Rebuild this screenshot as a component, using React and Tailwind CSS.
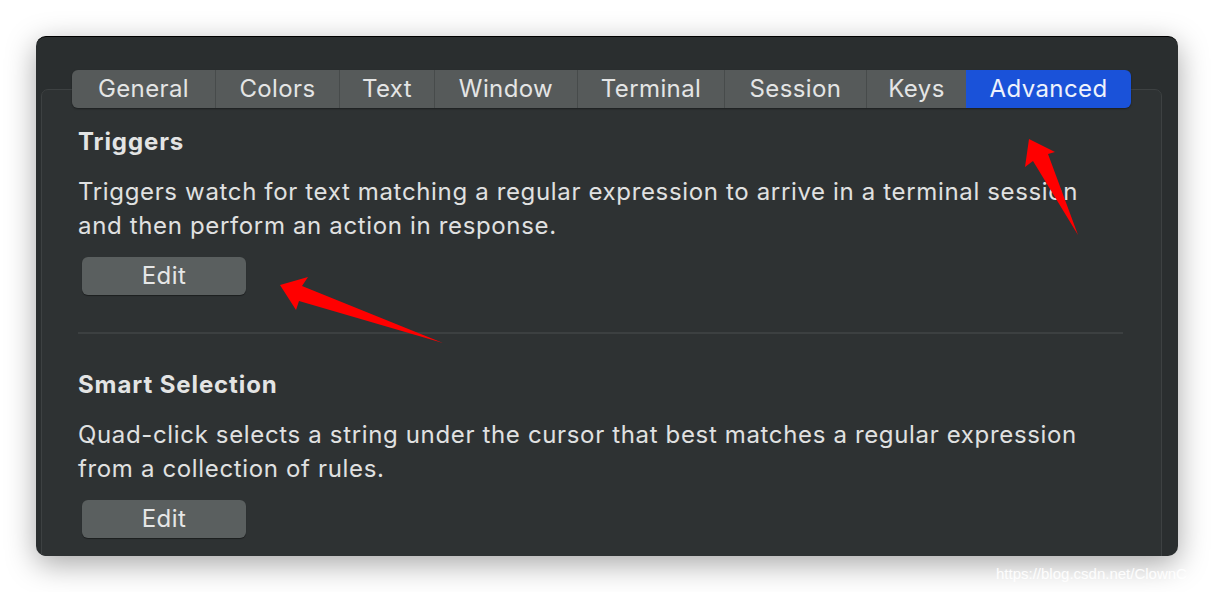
import React from 'react';

const tabs = ['General', 'Colors', 'Text', 'Window', 'Terminal', 'Session', 'Keys', 'Advanced'];
const tabWidths = ['w-[143px]', 'w-[124px]', 'w-[95px]', 'w-[143px]', 'w-[147px]', 'w-[142px]', 'w-[100px]', 'w-[165px]'];

function Section({ title, text }) {
  return (
    <div className="flex flex-col">
      <h2 className="text-[24px] font-bold leading-[30px] tracking-[0.9px] text-[#e3e4e4]">{title}</h2>
      <p className="mt-[18px] max-w-[1030px] text-[24px] leading-[34px] tracking-[0.65px] text-[#e0e1e1]">{text}</p>
      <button className="mt-[14px] ml-[4px] w-[164px] h-[38px] rounded-[6px] bg-[#5a5f5f] shadow-[0_1px_1px_rgba(0,0,0,0.4)] text-[24px] tracking-[0.4px] text-[#e6e7e7]">
        Edit
      </button>
    </div>
  );
}

export default function App() {
  return (
    <div className="relative w-[1214px] h-[592px] bg-white overflow-hidden" style={{ fontFamily: 'Inter, "Noto Sans", sans-serif' }}>
      <div className="absolute left-[36px] top-[36px] w-[1142px] h-[520px] rounded-[10px] bg-[#2a2e2f] border-t border-black shadow-[0_8px_30px_rgba(0,0,0,0.35)] overflow-hidden">
        <div className="relative pl-[5px] pr-[16px] pt-[52px]">
          {/* panel */}
          <div className="h-[520px] rounded-[7px] border border-[#3d4142] bg-[#2e3233] px-[36px] pt-[37px]">
            <Section
              title="Triggers"
              text="Triggers watch for text matching a regular expression to arrive in a terminal session and then perform an action in response."
            />
            <div className="mt-[37px] mb-[36px] h-[2px] bg-[#3c4041] mr-[2px]" />
            <Section
              title="Smart Selection"
              text="Quad-click selects a string under the cursor that best matches a regular expression from a collection of rules."
            />
          </div>
          {/* tabs */}
          <div className="absolute left-[36px] top-[33px] flex h-[38px] rounded-[6px] overflow-hidden shadow-[0_1px_2px_rgba(0,0,0,0.4)]">
            {tabs.map((t, i) => (
              <div
                key={t}
                className={`${tabWidths[i]} flex items-center justify-center text-[24px] tracking-[0.4px] ${
                  t === 'Advanced'
                    ? 'bg-[#1a52d9] text-[#eef2fc]'
                    : 'bg-[#565a5a] text-[#e4e5e5]'
                } ${i > 0 && t !== 'Advanced' ? 'border-l border-[#474b4b]' : ''}`}
              >
                {t}
              </div>
            ))}
          </div>
        </div>
      </div>

      {/* annotation arrows */}
      <svg className="absolute inset-0 pointer-events-none" width="1214" height="592">
        <polygon fill="#ff0000" points="1029,139 1055,152 1048,154 1078,235 1033,161 1025,167" />
        <polygon fill="#ff0000" points="280,285 308,277 302,286 443,343 299,301 296,310" />
      </svg>

      <div className="absolute left-[996px] top-[563px] text-[15px] text-white/90 whitespace-nowrap" style={{ fontFamily: '"Liberation Sans", Arial, sans-serif' }}>
        https://blog.csdn.net/ClownC
      </div>
    </div>
  );
}
